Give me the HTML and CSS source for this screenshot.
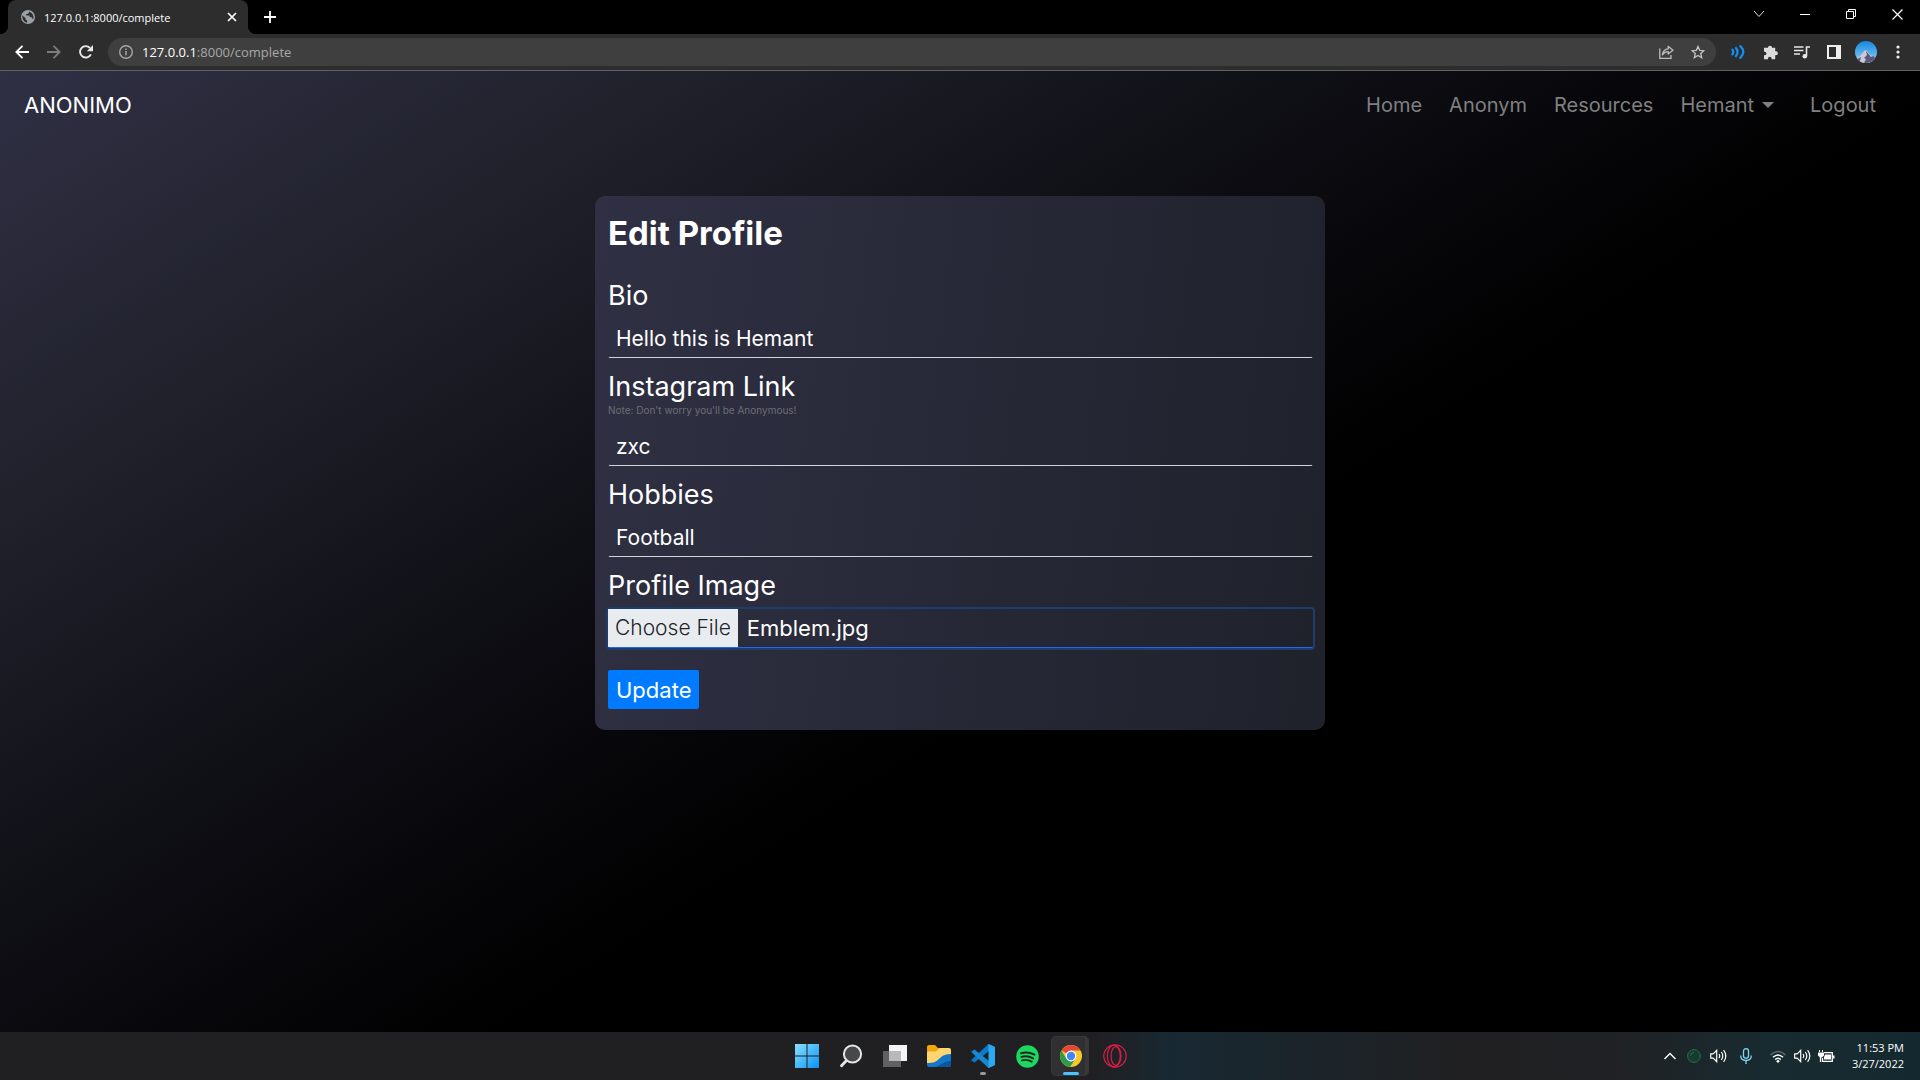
FILE: index.html
```html
<!DOCTYPE html>
<html lang="en">
<head>
<meta charset="utf-8">
<meta name="viewport" content="width=device-width, initial-scale=1">
<title>127.0.0.1:8000/complete</title>
<link rel="stylesheet" href="styles.css">
</head>
<body>
<div class="tabstrip">
  <div class="tab">
    <svg class="tab-icon" width="14" height="14" viewBox="0 0 14 14"><circle cx="7" cy="7" r="7" fill="#9aa0a6"/><path d="M1.2 5.2 4.5 8v1.4l1.6 1.2v2C3 12.200 1.400 9.500 1.200 5.200zM8 1.400v1.400L6.600 4H5.200v1.500h3.400V7h1.800l.8 1.600 1.100.3c.6-2.600-.4-6-4.300-7.500z" fill="#2d2d2d"/></svg>
    <span class="tab-title">127.0.0.1:8000/complete</span>
    <button class="icon-btn tab-close" aria-label="Close tab"><svg width="10" height="10" viewBox="0 0 10 10" stroke="#fff" stroke-width="1.700"><path d="M1 1l8 8M9 1 1 9"/></svg></button>
  </div>
  <button class="icon-btn new-tab" aria-label="New tab"><svg width="12" height="12" viewBox="0 0 12 12" stroke="#fff" stroke-width="1.800"><path d="M6 0v12M0 6h12"/></svg></button>
  <div class="window-controls">
    <button class="icon-btn" aria-label="Search tabs"><svg width="12" height="8" viewBox="0 0 12 8" fill="none" stroke="#ddd"><path d="M1 1l5 5.500L11 1"/></svg></button>
    <button class="icon-btn" aria-label="Minimize"><svg width="10" height="10" viewBox="0 0 10 10" stroke="#fff"><path d="M0 5.500h10"/></svg></button>
    <button class="icon-btn" aria-label="Restore"><svg width="10" height="10" viewBox="0 0 10 10" fill="none" stroke="#fff"><path d="M.5 2.500h7v7h-7zM2.500 2.500v-2h7v7h-2"/></svg></button>
    <button class="icon-btn" aria-label="Close"><svg width="11" height="11" viewBox="0 0 11 11" stroke="#fff" stroke-width="1.200"><path d="M.5.5l10 10M10.500.5l-10 10"/></svg></button>
  </div>
</div>

<div class="toolbar">
  <div class="tools">
    <button class="icon-btn" aria-label="Back"><svg width="14" height="14" viewBox="0 0 14 14" fill="none" stroke="#fff" stroke-width="1.800"><path d="M14 7H1.500M7.500.8 1.300 7l6.200 6.200"/></svg></button>
    <button class="icon-btn" aria-label="Forward"><svg width="14" height="14" viewBox="0 0 14 14" fill="none" stroke="#7d7d7d" stroke-width="1.800"><path d="M0 7h12.500M6.500.8 12.700 7l-6.200 6.200"/></svg></button>
    <button class="icon-btn" aria-label="Reload"><svg width="14" height="14" viewBox="0 0 14 14"><path d="M11.900 9.300A5.700 5.700 0 1 1 11 3" fill="none" stroke="#e8e8e8" stroke-width="1.900"/><path d="M14 0v6.200H7.800z" fill="#e8e8e8"/></svg></button>
  </div>
  <div class="address">
    <svg width="14" height="14" viewBox="0 0 14 14" fill="none" stroke="#a4a8ac" stroke-width="1.400"><circle cx="7" cy="7" r="6.300"/><path d="M7 6v4.300M7 3.400v1.500" stroke-width="1.500"/></svg>
    <div class="url" role="textbox" aria-label="Address"><span class="host">127.0.0.1</span>:8000/complete</div>
    <button class="icon-btn" aria-label="Share"><svg width="15" height="14" viewBox="0 0 15 14" fill="none" stroke="#bcbcbc" stroke-width="1.300"><path d="M.8 3.500v9.800H12V10"/><path d="M3.400 9.800C4 6 6.300 4.100 9.200 3.900V1.300L14 5.200 9.200 9.100V6.700C6.500 6.700 4.700 7.800 3.400 9.800z" stroke-linejoin="round"/></svg></button>
    <button class="icon-btn" aria-label="Bookmark"><svg width="14" height="14" viewBox="0 0 14 14" fill="none" stroke="#c4c4c4" stroke-width="1.300"><path d="M7 1.400l1.700 3.900 4.200.4-3.200 2.800 1 4.200L7 10.500l-3.700 2.200 1-4.200L1.100 5.700l4.200-.4z"/></svg></button>
  </div>
  <div class="tools">
    <button class="icon-btn" aria-label="Volume extension"><svg width="14" height="14" viewBox="0 0 14 14" fill="none" stroke="#0f90f2" stroke-width="2.300" stroke-linecap="round"><path d="M1.500 4.800q1.600 2.200 0 4.400M5 3q3.200 4 0 8M9.300 1.200q6 5.800 0 11.600"/></svg></button>
    <button class="icon-btn" aria-label="Extensions"><svg width="15" height="15" viewBox="0 0 15 15"><path d="M5 2.700a2 2 0 0 1 4 0h3.200v3.600h.7a2 2 0 0 1 0 4h-.7v4H8.600v-.8a1.800 1.800 0 0 0-3.600 0v.8H1v-4h.7a1.700 1.700 0 0 0 0-3.500H1V2.700z" fill="#dcdcdc"/></svg></button>
    <button class="icon-btn" aria-label="Media"><svg width="16" height="14" viewBox="0 0 16 14" fill="none" stroke="#e8e8e8" stroke-width="1.600"><path d="M0 2h9.500M0 5.500h9.500M0 9h6M12.500 11V2H16"/><circle cx="10.800" cy="11.200" r="2.300" fill="#e8e8e8" stroke="none"/></svg></button>
    <button class="icon-btn" aria-label="Side panel"><svg width="14" height="14" viewBox="0 0 14 14"><path fill="#eee" fill-rule="evenodd" d="M0 0h14v14H0zM2 2v10h7V2z"/></svg></button>
    <button class="icon-btn" aria-label="Profile"><svg width="22" height="22" viewBox="0 0 22 22"><defs><linearGradient id="sky" x2="0" y2="1"><stop stop-color="#1388dd"/><stop offset="1" stop-color="#8fd0f5"/></linearGradient><clipPath id="round"><circle cx="11" cy="11" r="11"/></clipPath></defs><g clip-path="url(#round)"><path fill="url(#sky)" d="M0 0h22v22H0z"/><path fill="#c9c9d8" d="M0 18l5-3 5-6 2 1 3 4 7 4v5H0z"/><path fill="#585a78" d="M11 10l1 4-3 3 2 1-2 4h6l7-1v-3l-4-3-2 1zM2 18l4-2-1 4H1z"/></g></svg></button>
    <button class="icon-btn" aria-label="Menu"><svg width="4" height="14" viewBox="0 0 4 14" fill="#eee"><circle cx="2" cy="2" r="1.600"/><circle cx="2" cy="7" r="1.600"/><circle cx="2" cy="12" r="1.600"/></svg></button>
  </div>
</div>

<div class="page">
  <header class="navbar">
    <a class="brand" href="#">ANONIMO</a>
    <nav class="nav-links">
      <a href="#">Home</a>
      <a href="#">Anonym</a>
      <a href="#">Resources</a>
      <a class="dropdown" href="#">Hemant</a>
      <a href="#">Logout</a>
    </nav>
  </header>
  <main class="content">
    <form class="card">
      <h1>Edit Profile</h1>
      <div class="field">
        <label for="bio">Bio</label>
        <input id="bio" type="text" value="Hello this is Hemant">
      </div>
      <div class="field">
        <label for="instagram">Instagram Link</label>
        <small>Note: Don't worry you'll be Anonymous!</small>
        <input id="instagram" type="text" value="zxc">
      </div>
      <div class="field">
        <label for="hobbies">Hobbies</label>
        <input id="hobbies" type="text" value="Football">
      </div>
      <div class="field">
        <label for="image">Profile Image</label>
        <div class="file-control">
          <input id="image" class="file-native" type="file" accept="image/*">
          <label class="file-button" for="image">Choose File</label>
          <span class="file-name">Emblem.jpg</span>
        </div>
      </div>
      <button class="submit" type="submit">Update</button>
    </form>
  </main>
</div>

<footer class="taskbar">
  <div class="apps">
    <button class="app" aria-label="Start"><svg width="24" height="24" viewBox="0 0 24 24"><defs><linearGradient id="win" x2="1" y2="1"><stop stop-color="#8be0ff"/><stop offset="1" stop-color="#0a93f5"/></linearGradient></defs><path fill="url(#win)" d="M0 0h11.500v11.500H0zM12.500 0H24v11.500H12.500zM0 12.500h11.500V24H0zM12.500 12.500H24V24H12.500z"/></svg></button>
    <button class="app" aria-label="Search"><svg width="24" height="24" viewBox="0 0 24 24"><path d="M7.500 16.500l-5 5.300" stroke="#e6e6e6" stroke-width="2.800" stroke-linecap="round"/><circle cx="13.500" cy="10" r="8.600" fill="#47484a" stroke="#e6e6e6" stroke-width="2"/></svg></button>
    <button class="app" aria-label="Task view"><svg width="24" height="24" viewBox="0 0 24 24"><path fill="#606062" d="M0 7h18v16H0z"/><path fill="#f4f4f4" d="M6 1h18v16H6z"/><path fill="#b9b9b9" d="M6 7h12v10H6z"/></svg></button>
    <button class="app" aria-label="File Explorer"><svg width="24" height="24" viewBox="0 0 24 24"><path fill="#f2a60d" d="M0 3q0-2 2-2h6l3 3h7q2 0 2 2v8H0z"/><path fill="#ffd572" d="M0 9q0-1.500 2-1.500h7L13 4h9q2 0 2 2v11L0 20z"/><path fill="#1277c9" d="M0 19c7 0 9-1 13-5 3-3 6-4 11-4v11q0 2-2 2H2q-2 0-2-2z"/><path fill="#0a579e" d="M8 23c5-1 8-6 16-6v4q0 2-2 2z"/></svg></button>
    <button class="app running" aria-label="Visual Studio Code"><svg width="24" height="24" viewBox="0 0 24 24"><path fill="#0a7bc8" d="M17.500 0 24 3l-6 4L3.500 18.500 0 16.200z"/><path fill="#1787d1" d="M0 7.800l3.500-2.300L18 17l6 4-6.500 3z"/><path fill="#2ba8f0" d="M17.500 0 24 3v18l-6.500 3z"/></svg></button>
    <button class="app" aria-label="Spotify"><svg width="23" height="23" viewBox="0 0 23 23"><circle cx="11.500" cy="11.500" r="11.300" fill="#1ed760"/><path d="M4.800 8.300q7-2.200 13.600 1.400M5.400 11.900q6-1.700 11.700 1.500M6 15.400q5-1.400 9.700 1.200" fill="none" stroke="#1d2a22" stroke-width="1.900" stroke-linecap="round"/></svg></button>
    <button class="app active" aria-label="Google Chrome"><svg width="22" height="22" viewBox="0 0 22 22"><circle cx="11" cy="11" r="11" fill="#fbc72e"/><path d="M11 11 1.500 5.500A11 11 0 0 1 20.500 5.500H11z" fill="#e5473a"/><path d="M1.500 5.500A11 11 0 0 0 10 21.900L15.500 13.800 11 11 6.200 13.500z" fill="#2a9c4b"/><circle cx="11" cy="11" r="5.400" fill="#fff"/><circle cx="11" cy="11" r="4.200" fill="#4285f4"/></svg></button>
    <button class="app" aria-label="Opera GX"><svg width="24" height="24" viewBox="0 0 24 24" fill="none" stroke="#d81e45" stroke-width="1.200"><circle cx="12" cy="12" r="11.200"/><ellipse cx="10.800" cy="12" rx="6.500" ry="10.800"/><ellipse cx="13" cy="12" rx="5" ry="9.400"/></svg></button>
  </div>
  <div class="tray">
    <button class="icon-btn" aria-label="Hidden icons"><svg width="12" height="8" viewBox="0 0 12 8" fill="none" stroke="#fff" stroke-width="1.400"><path d="M.5 7 6 1.500 11.500 7"/></svg></button>
    <button class="icon-btn" aria-label="Sync"><svg width="14" height="14" viewBox="0 0 14 14" fill="#173a2c" stroke="#23704f"><circle cx="7" cy="7" r="6.400"/><path d="M3.500 7A3.500 3.500 0 0 1 7 3.500" fill="none"/></svg></button>
    <button class="icon-btn" aria-label="Sound output"><svg width="17" height="14" viewBox="0 0 17 14" fill="none" stroke="#fff" stroke-width="1.200"><path d="M.7 4.800h2.500L6.700 1.300v11.400L3.200 9.200H.7zM9 5q1.500 2 0 4M11.300 3q3 4 0 8M13.600 1.200q4.400 5.800 0 11.600"/></svg></button>
    <button class="icon-btn wide" aria-label="Microphone"><svg width="12" height="16" viewBox="0 0 12 16" fill="none" stroke="#7fd8f5" stroke-width="1.300"><rect x="3.500" y=".7" width="5" height="9.500" rx="2.500"/><path d="M.7 7.500q0 5 5.300 5t5.300-5M6 12.500V16"/></svg></button>
    <div class="quick-settings">
      <button class="icon-btn" aria-label="Wi-Fi"><svg width="16" height="13" viewBox="0 0 16 13" fill="none" stroke="#fff" stroke-width="1.500"><path d="M.6 5q7.400-7 14.800 0" stroke="#5c6468"/><path d="M3 7.300q5-4.600 10 0M5.200 9.600q2.800-2.600 5.600 0"/><circle cx="8" cy="11.300" r="1.400" fill="#fff" stroke="none"/></svg></button>
      <button class="icon-btn" aria-label="Volume"><svg width="17" height="14" viewBox="0 0 17 14" fill="none" stroke="#fff" stroke-width="1.200"><path d="M.7 4.800h2.500L6.700 1.300v11.400L3.200 9.200H.7zM9 5q1.500 2 0 4M11.300 3q3 4 0 8"/><path d="M13.600 1.200q4.400 5.800 0 11.600"/></svg></button>
      <button class="icon-btn" aria-label="Battery"><svg width="17" height="13" viewBox="0 0 17 13"><path d="M6 2.700h8.300v8.600H4.500V8M2.500 7v5" fill="none" stroke="#fff" stroke-width="1.300"/><path fill="#fff" d="M7 4.500h6v5H6V7zM15 5.500h1.500v3H15zM0 2.500h6v3L4 7.500H2l-2-2zM1 0h1v2H1zM4 0h1v2H4z"/></svg></button>
    </div>
    <div class="clock"><span>11:53 PM</span><span>3/27/2022</span></div>
  </div>
</footer>
</body>
</html>
```
FILE: styles.css
```css
* { box-sizing: border-box; }

body {
  margin: 0;
  min-height: 100vh;
  display: flex;
  flex-direction: column;
  background: #000;
  color: #fff;
  font-family: Inter, "Open Sans", sans-serif;
}

a { color: inherit; text-decoration: none; }
svg { display: block; flex: none; }

.icon-btn {
  display: flex;
  align-items: center;
  justify-content: center;
  width: 32px;
  height: 28px;
  padding: 0;
  border: 0;
  background: none;
}

/* Browser chrome */
.tabstrip,
.toolbar,
.taskbar { font-family: "Open Sans", "Noto Sans", sans-serif; }

.tabstrip {
  display: flex;
  align-items: flex-start;
  height: 34px;
  padding-left: 8px;
}

.tab {
  position: relative;
  display: flex;
  align-items: center;
  width: 240px;
  height: 34px;
  padding-left: 13px;
  border-radius: 8px 8px 0 0;
  background: #2d2d2d;
}

.tab::before,
.tab::after {
  content: "";
  position: absolute;
  bottom: 0;
  width: 8px;
  height: 8px;
}

.tab::before { left: -8px; background: radial-gradient(circle at 0 0, #000 8px, #2d2d2d 8px); }
.tab::after { right: -8px; background: radial-gradient(circle at 100% 0, #000 8px, #2d2d2d 8px); }

.tab-title {
  flex: 1;
  margin-left: 9px;
  font-size: 11px;
}

.tab-close,
.new-tab { height: 34px; }
.new-tab { margin-left: 6px; }

.window-controls { display: flex; margin-left: auto; }
.window-controls .icon-btn { width: 46px; }

.toolbar {
  display: flex;
  align-items: center;
  gap: 6px;
  height: 37px;
  padding: 0 6px;
  background: #2d2d2d;
  border-bottom: 1px solid #5f6163;
}

.tools { display: flex; }

.address {
  flex: 1;
  display: flex;
  align-items: center;
  height: 28px;
  padding: 0 2px 0 11px;
  border-radius: 14px;
  background: #3f3f3f;
}

.url {
  flex: 1;
  margin-left: 9px;
  font-size: 13px;
  color: #a8a8a8;
}

.host { color: #fff; }

/* Site */
.page {
  flex: 1;
  background: linear-gradient(147deg, #303045 0%, #20212b 20%, #0c0c12 42%, #000 58%);
}

.navbar {
  display: flex;
  align-items: center;
  justify-content: space-between;
  padding: 16px 44px 16px 24px;
  line-height: 36px;
}

.brand { font-size: 22px; }

.nav-links {
  display: flex;
  gap: 27px;
  font-size: 20px;
  color: #808080;
}

.dropdown {
  display: flex;
  align-items: center;
  gap: 8px;
  margin-right: 9px;
}

.dropdown::after {
  content: "";
  border: 6px solid transparent;
  border-top-color: currentColor;
  border-bottom: 0;
}

.content {
  display: flex;
  justify-content: center;
  padding: 57px 16px;
}

.card {
  width: 100%;
  max-width: 730px;
  padding: 17px 12px 21px 13px;
  border-radius: 10px;
  background: linear-gradient(97deg, #2f3043, #1f212b);
}

h1 {
  margin: 0 0 24px;
  font-size: 33px;
  line-height: 40px;
}

.field {
  display: flex;
  flex-direction: column;
  margin-bottom: 10px;
}

.field > label {
  margin-bottom: 4px;
  font-size: 27px;
  line-height: 38px;
}

.field > small {
  margin: -8px 0 9px;
  font-size: 10px;
  line-height: 16px;
  color: #6d6e74;
}

.field > input {
  height: 39px;
  padding: 0 7px;
  border: 1px solid transparent;
  border-bottom-color: #ced4da;
  border-radius: 2px;
  outline: 0;
  background: none;
  color: #fff;
  font: inherit;
  font-size: 21px;
}

.file-control {
  display: flex;
  height: 39px;
  border-bottom: 1px solid #1d6be6;
  border-radius: 2px;
  box-shadow: 0 0 0 2px #1c3d6e;
  font-size: 21px;
  line-height: 38px;
}

.file-native {
  position: absolute;
  width: 1px;
  height: 1px;
  opacity: 0;
}

.file-button {
  padding: 0 7px;
  background: #e9ecef;
  color: #212529;
  font-weight: 300;
}

.file-name {
  padding-left: 9px;
  font-size: 22px;
}

.submit {
  height: 39px;
  margin-top: 12px;
  padding: 0 8px;
  border: 0;
  border-radius: 2px;
  background: #007bff;
  color: #fff;
  font: inherit;
  font-size: 22px;
}

/* Desktop taskbar */
.taskbar {
  display: grid;
  grid-template-columns: 1fr auto 1fr;
  align-items: center;
  height: 48px;
  background: linear-gradient(90deg, #202022 0%, #202022 57%, #182832 61%, #1b242a 68%, #202022 76%, #202124 84%, #182b30 92%, #14292f 100%);
}

.apps { grid-column: 2; display: flex; padding-left: 2px; }

.app {
  display: flex;
  align-items: center;
  justify-content: center;
  position: relative;
  width: 44px;
  height: 40px;
  padding: 0;
  border: 0;
  background: none;
}

.app.active::before {
  content: "";
  position: absolute;
  inset: 0 4px 0 2px;
  border: 1px solid #38383a;
  border-right-width: 4px;
  border-radius: 5px;
  background: #303032;
}

.app.active svg { position: relative; }

.app.running::after,
.app.active::after {
  content: "";
  position: absolute;
  bottom: 1px;
  width: 6px;
  height: 3px;
  border-radius: 2px;
  background: #999;
}

.app.active::after { width: 16px; background: #4cc2ff; }

.tray {
  display: flex;
  align-items: center;
  justify-content: flex-end;
  padding-right: 16px;
}

.tray .icon-btn { width: 24px; }
.tray .wide { width: 32px; }

.quick-settings { display: flex; padding-left: 4px; }

.clock {
  display: flex;
  flex-direction: column;
  width: 66px;
  text-align: right;
  font-size: 11px;
  line-height: 16px;
}
```
